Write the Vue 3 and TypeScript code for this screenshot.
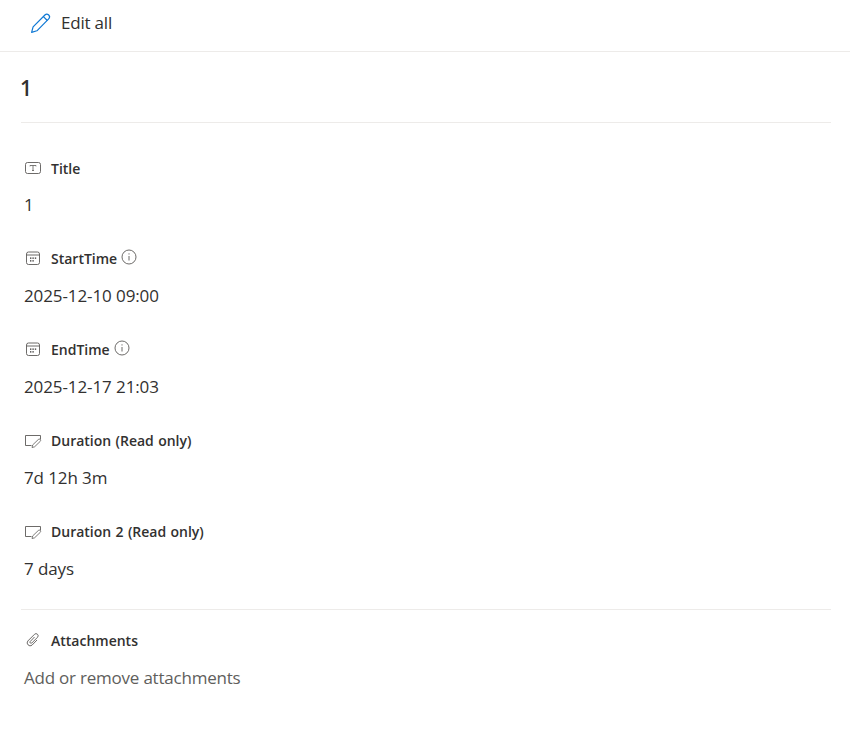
<script setup lang="ts">
interface Field {
  label: string
  value: string
  icon: 'text' | 'date' | 'note'
  info?: boolean
}

const fields: Field[] = [
  { label: 'Title', value: '1', icon: 'text' },
  { label: 'StartTime', value: '2025-12-10 09:00', icon: 'date', info: true },
  { label: 'EndTime', value: '2025-12-17 21:03', icon: 'date', info: true },
  { label: 'Duration (Read only)', value: '7d 12h 3m', icon: 'note' },
  { label: 'Duration 2 (Read only)', value: '7 days', icon: 'note' }
]
</script>

<template>
  <div class="page">
    <div class="toolbar">
      <svg class="edit-icon" width="22" height="22" viewBox="0 0 22 22" fill="none" stroke="#0f78d4" stroke-width="1.2">
        <path d="M1.6 20.4l1.5-5.6L14.9 3a2.6 2.6 0 0 1 3.8 3.8L6.9 18.8z" stroke-linejoin="round" />
        <path d="M13.4 4.6l3.9 3.9" />
      </svg>
      <span class="edit-label">Edit all</span>
    </div>

    <div class="body">
      <h1 class="heading">1</h1>

      <div class="fields">
        <div v-for="field in fields" :key="field.label" class="field">
          <div class="label-row">
            <span class="icon-box">
              <svg v-if="field.icon === 'text'" width="18" height="16" viewBox="0 0 18 16" fill="none" stroke="#5c5a58" stroke-width="0.9">
                <rect x="1.5" y="2.5" width="15" height="11" rx="2" />
                <path d="M6 6.4v-.9h6v.9M9 5.5v5M8 10.5h2" stroke-width="0.8" />
              </svg>
              <svg v-else-if="field.icon === 'date'" width="18" height="16" viewBox="0 0 18 16" fill="none" stroke="#5c5a58" stroke-width="0.9">
                <rect x="2.5" y="2" width="13" height="12.5" rx="2" />
                <path d="M2.5 5h13" />
                <path d="M6 8.2h1.4M8.4 8.2h1.4M10.8 8.2h1.4M6 10.8h1.4M8.4 10.8h1.4" stroke="#323130" stroke-width="1.3" />
              </svg>
              <svg v-else width="18" height="16" viewBox="0 0 18 16" fill="none" stroke="#5c5a58" stroke-width="0.9">
                <path d="M7.5 13.5h-6v-10h15v4" />
                <path d="M8 15.5l.7-2.6 5.6-5.4a1.3 1.3 0 0 1 1.9 1.9l-5.6 5.4z" stroke-width="0.8" stroke-linejoin="round" />
              </svg>
            </span>
            <span class="label">{{ field.label }}</span>
            <svg v-if="field.info" class="info" width="16" height="16" viewBox="0 0 16 16" fill="none" stroke="#5c5a58" stroke-width="0.9">
              <circle cx="8" cy="8" r="7" />
              <path d="M8 7v4.5" />
              <path d="M8 4.3v1.2" />
            </svg>
          </div>
          <div class="value">{{ field.value }}</div>
        </div>
      </div>

      <div class="attachments">
        <div class="label-row">
          <span class="icon-box">
            <svg width="18" height="16" viewBox="0 0 18 16" fill="none" stroke="#5c5a58" stroke-width="0.9">
              <path d="M10.5 5L6.2 9.5a1.1 1.1 0 0 0 1.6 1.5l5.7-5.7a2.1 2.1 0 0 0-3-3L3.8 9A3 3 0 0 0 8 13.2l5-5.2" />
            </svg>
          </span>
          <span class="label">Attachments</span>
        </div>
        <div class="value muted">Add or remove attachments</div>
      </div>
    </div>
  </div>
</template>

<style>
html,
body {
  background: #fff;
}
</style>

<style scoped>
.page {
  width: 850px;
  height: 739px;
  overflow: hidden;
  font-family: 'Open Sans', 'Noto Sans', 'Liberation Sans', sans-serif;
  color: #323130;
}

.toolbar {
  display: flex;
  align-items: center;
  box-sizing: border-box;
  height: 52px;
  padding-left: 30px;
  padding-bottom: 6px;
  gap: 9px;
  border-bottom: 1px solid #edebe9;
}

.edit-label {
  font-size: 17px;
  letter-spacing: -0.2px;
}

.body {
  padding: 0 19px 0 21px;
}

.heading {
  margin: 0;
  height: 70px;
  line-height: 72px;
  font-size: 21px;
  font-weight: 600;
  text-indent: -1px;
  border-bottom: 1px solid #edebe9;
}

.fields {
  display: flex;
  flex-direction: column;
  padding: 34px 0 0 3px;
}

.field {
  height: 91px;
}

.label-row {
  display: flex;
  align-items: center;
  height: 20px;
}

.field:first-child .label-row {
  margin-top: 1px;
}

.field:first-child .value {
  margin-top: 16px;
}

.icon-box {
  display: flex;
  flex: none;
  width: 27px;
}

.label {
  font-size: 14px;
  font-weight: 600;
  word-spacing: 0.7px;
}

.info {
  margin-left: 4px;
  margin-top: -2px;
}

.value {
  margin-top: 17px;
  font-size: 17px;
  line-height: 22px;
  letter-spacing: -0.1px;
}

.muted {
  color: #605e5c;
  letter-spacing: -0.22px;
}

.attachments {
  margin-top: -3px;
  padding: 20px 0 0 3px;
  border-top: 1px solid #edebe9;
}
</style>
